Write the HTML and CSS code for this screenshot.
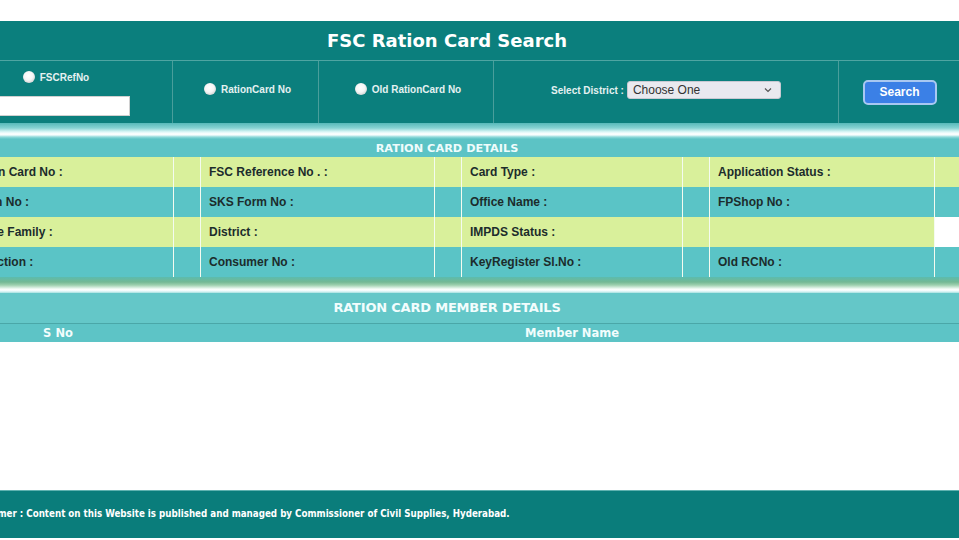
FILE: index.html
```html
<!DOCTYPE html>
<html lang="en">
<head>
    <meta charset="UTF-8">
    <title>FSC Ration Card Search</title>
    <link rel="stylesheet" href="styles.css">
</head>
<body>
    <div class="page">
        <div class="title-bar">FSC Ration Card Search</div>

        <div class="search-row">
            <div class="cell cell-ref">
                <label class="opt"><input type="radio" name="stype">FSCRefNo</label>
                <input type="text" class="ref-input">
            </div>
            <div class="cell">
                <label class="opt"><input type="radio" name="stype">RationCard No</label>
            </div>
            <div class="cell">
                <label class="opt"><input type="radio" name="stype">Old RationCard No</label>
            </div>
            <div class="cell cell-district">
                <span class="lbl">Select District :</span>
                <div class="select">
                    <span>Choose One</span>
                    <svg width="8" height="6" viewBox="0 0 8 6"><polyline points="1,1.5 4,4.5 7,1.5" fill="none" stroke="#555" stroke-width="1.2"/></svg>
                </div>
            </div>
            <div class="cell cell-btn">
                <button class="btn">Search</button>
            </div>
        </div>

        <div class="sep-top"></div>

        <div class="details">
            <div class="details-head">RATION CARD DETAILS</div>
            <div class="row row-light">
                <div class="c">Ration Card No :</div><div class="c"></div>
                <div class="c">FSC Reference No . :</div><div class="c"></div>
                <div class="c">Card Type :</div><div class="c"></div>
                <div class="c">Application Status :</div><div class="c"></div>
            </div>
            <div class="row row-dark">
                <div class="c">Token No :</div><div class="c"></div>
                <div class="c">SKS Form No :</div><div class="c"></div>
                <div class="c">Office Name :</div><div class="c"></div>
                <div class="c">FPShop No :</div><div class="c"></div>
            </div>
            <div class="row row-light">
                <div class="c">Whole Family :</div><div class="c"></div>
                <div class="c">District :</div><div class="c"></div>
                <div class="c">IMPDS Status :</div><div class="c"></div>
                <div class="c"></div><div class="c blank"></div>
            </div>
            <div class="row row-dark">
                <div class="c">Collection :</div><div class="c"></div>
                <div class="c">Consumer No :</div><div class="c"></div>
                <div class="c">KeyRegister Sl.No :</div><div class="c"></div>
                <div class="c">Old RCNo :</div><div class="c"></div>
            </div>
        </div>

        <div class="sep-bottom"></div>

        <div class="members">
            <div class="members-head">RATION CARD MEMBER DETAILS</div>
            <div class="members-cols">
                <div>S No</div>
                <div class="col-name">Member Name</div>
            </div>
        </div>

        <div class="footer">Disclaimer : Content on this Website is published and managed by Commissioner of Civil Supplies, Hyderabad.</div>
    </div>
</body>
</html>
```

FILE: styles.css
```css
body {
    margin: 0;
    padding: 21px 0 2px;
    height: 540px;
    box-sizing: border-box;
    overflow: hidden;
    background-color: #fff;
    font-family: "Liberation Sans", Arial, sans-serif;
}

.page {
    margin-left: -40px;
    width: 1000px;
    height: 100%;
    display: flex;
    flex-direction: column;
}

/* header */
.title-bar {
    height: 39px;
    line-height: 40px;
    padding-right: 26px;
    text-align: center;
    background-color: #0b7f7d;
    color: #fff;
    font-family: "DejaVu Sans", Verdana, sans-serif;
    font-weight: bold;
    font-size: 18px;
}

.search-row {
    display: grid;
    grid-template-columns: 212px 146px 175px 345px 122px;
    height: 62px;
    border-top: 1px solid #4fa5a2;
    background-color: #0b7f7d;
}

.cell {
    display: flex;
    align-items: center;
    justify-content: center;
    border-left: 1px solid #4a9e9b;
    padding-bottom: 6px;
}

.cell:first-child {
    border-left: none;
}

.cell-ref {
    flex-direction: column;
    justify-content: flex-start;
    padding: 10px 20px 0 0;
    gap: 13px;
}

.cell-ref .opt {
    padding-left: 0;
}

.cell-district {
    padding-bottom: 4px;
}

.cell-btn {
    padding-bottom: 0;
}

.opt {
    display: flex;
    align-items: center;
    color: #e4f1f1;
    font-size: 10px;
    font-weight: bold;
    padding-left: 4px;
}

.opt input {
    appearance: none;
    width: 12px;
    height: 12px;
    margin: 0 5px 0 0;
    border-radius: 50%;
    background: radial-gradient(circle at 45% 40%, #fff 0, #f6f6f6 45%, #b9b9b9 100%);
}

.ref-input {
    width: 148px;
    height: 20px;
    box-sizing: border-box;
    border: 1px solid #d0d0d0;
    background: #fff;
    margin: 0;
}

.lbl {
    color: #e4f1f1;
    font-size: 10px;
    font-weight: bold;
    margin-right: 3px;
}

.select {
    width: 154px;
    height: 18px;
    box-sizing: border-box;
    display: flex;
    align-items: center;
    justify-content: space-between;
    padding: 0 8px 0 5px;
    background-color: #e9e9ef;
    border: 1px solid #c9c9d2;
    border-radius: 3px;
    color: #333;
    font-size: 12px;
}

.btn {
    width: 74px;
    height: 25px;
    background-color: #3b80e6;
    border: 2px solid #a8c8f1;
    border-radius: 5px;
    color: #fff;
    font-family: "Liberation Sans", Arial, sans-serif;
    font-weight: bold;
    font-size: 12px;
}

/* separators */
.sep-top {
    height: 16px;
    background: linear-gradient(to bottom, #56b9b9 0, #86d3d3 5px, #dff8f8 9px, #fff 11px, #f2fcfc 12px, #8fd9da 14px, #5ec4c6 16px);
}

.sep-bottom {
    height: 16px;
    background: linear-gradient(to bottom, #5cbcae 0, #73b894 5px, #9ccfae 8px, #f4fcf8 12px, #fff 13px, #cdf0f0 15px, #9fdddd 16px);
}

/* ration card details */
.details-head {
    height: 18px;
    line-height: 19px;
    padding-right: 26px;
    text-align: center;
    background-color: #5cc3c5;
    color: #effcfc;
    font-family: "DejaVu Sans", Verdana, sans-serif;
    font-weight: bold;
    font-size: 11.3px;
}

.row {
    display: grid;
    grid-template-columns: 213px 27px 234px 27px 221px 27px 225px 26px;
    height: 30px;
}

.row-light {
    background-color: #d9f09b;
}

.row-dark {
    background-color: #5ac4c6;
}

.c {
    padding-left: 8px;
    line-height: 30px;
    border-left: 1px solid #f4fbf0;
    color: #1c2c2c;
    font-size: 12px;
    font-weight: bold;
    white-space: nowrap;
}

.c:first-child {
    border-left: none;
}

.c.blank {
    background-color: #fff;
}

/* member details */
.members-head {
    height: 30px;
    line-height: 30px;
    padding-right: 26px;
    text-align: center;
    background-color: #64c7c8;
    border-bottom: 1px solid #4aa7a8;
    color: #f2fdfd;
    font-family: "DejaVu Sans", Verdana, sans-serif;
    font-weight: bold;
    font-size: 13px;
    letter-spacing: -0.2px;
}

.members-cols {
    display: grid;
    grid-template-columns: 196px 1fr;
    height: 18px;
    line-height: 18px;
    text-align: center;
    background-color: #5dc4c6;
    color: #f2fdfd;
    font-family: "DejaVu Sans", Verdana, sans-serif;
    font-weight: bold;
    font-size: 11.5px;
}

.col-name {
    padding-left: 28px;
}

/* footer */
.footer {
    margin-top: auto;
    height: 48px;
    line-height: 46px;
    padding-left: 5px;
    box-sizing: border-box;
    border-top: 1px solid #5fb2b0;
    background-color: #0a7d7b;
    color: #fff;
    font-family: "DejaVu Sans Condensed", "DejaVu Sans", sans-serif;
    font-weight: bold;
    font-size: 9.7px;
}
```
